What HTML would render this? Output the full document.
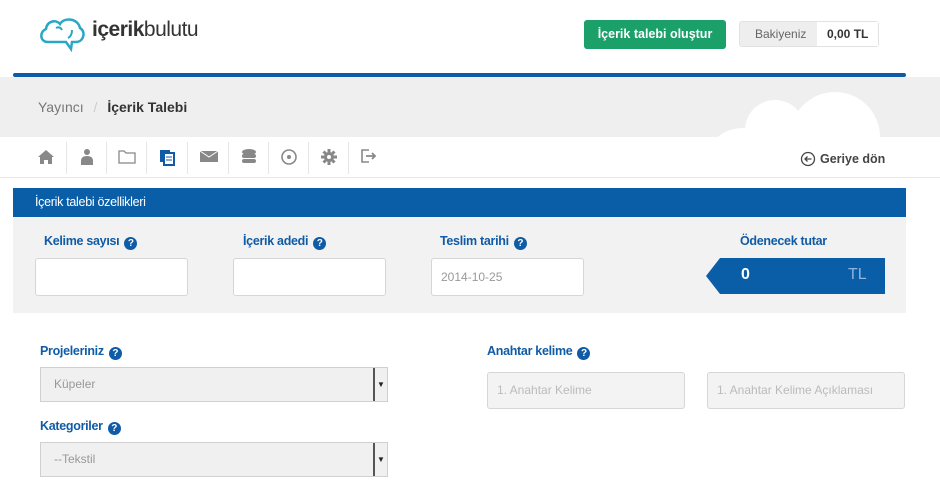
<!DOCTYPE html><html><head><meta charset="utf-8"><style>
*{box-sizing:border-box;margin:0;padding:0}
body{width:940px;height:486px;overflow:hidden;background:#fff;font-family:"Liberation Sans",sans-serif;position:relative}
.a{position:absolute}
.lbl{position:absolute;color:#0f5ba6;font-weight:bold;font-size:12.5px;letter-spacing:-0.3px}
.q{display:inline-block;width:13px;height:13px;border-radius:50%;background:#0f5ba6;color:#fff;font-size:10px;text-align:center;line-height:13px;margin-left:5px;vertical-align:-1px}
.inp{position:absolute;background:#fff;border:1px solid #d6d6d6;border-radius:3px;font-size:12px;color:#999;padding-left:9px}
.sel{position:absolute;background:#f0f0f0;border:1px solid #d0d0d0;font-size:12px;color:#999;padding-left:13px}
.sel b{position:absolute;right:0;top:0;bottom:0;width:14px;background:#f0f0f0;border-left:2px solid #555;font-size:8px;color:#222;text-align:center}
.ic{position:absolute;top:148px;width:18px;height:18px;color:#888;font-size:15px;text-align:center}
.sep{position:absolute;top:142px;width:1px;height:32px;background:#e6e6e6}
</style></head><body>
<svg class="a" style="left:38px;top:16px" width="48" height="36" viewBox="0 0 48 36"><path d="M10 26 C2 26 1 16 8 13 C9 5 18 3 22 8 C26 1 40 2 42 12 C48 15 46 26 38 26 L34 26 L33 33 L28 26 Z" fill="none" stroke="#2aa7c6" stroke-width="2.5"/><path d="M18 12 q4 -2 6 2 M34 14 q0 6 -4 8" fill="none" stroke="#2aa7c6" stroke-width="2"/></svg>
<div class="a" style="left:92px;top:18px;font-size:21px;color:#333;letter-spacing:-0.5px"><b>içerik</b>bulutu</div>
<div class="a" style="left:584px;top:20px;width:142px;height:29px;background:#1aa068;border-radius:3px;color:#fff;font-weight:bold;font-size:12.5px;text-align:center;line-height:29px">İçerik talebi oluştur</div>
<div class="a" style="left:739px;top:21px;width:140px;height:26px;border:1px solid #e2e2e2;border-radius:3px;background:#eee;font-size:12px;line-height:24px"><span style="position:absolute;left:15px;color:#666">Bakiyeniz</span><span style="position:absolute;left:77px;right:0;top:0;bottom:0;background:#fff;font-weight:bold;color:#333;padding-left:10px">0,00 TL</span></div>
<div class="a" style="left:13px;top:73px;width:893px;height:4px;background:#0f5ba6;border-radius:2px"></div>
<div class="a" style="left:0;top:77px;width:940px;height:60px;background:#efefef"></div>
<div class="a" style="left:745px;top:100px;width:60px;height:60px;border-radius:50%;background:#fff"></div>
<div class="a" style="left:790px;top:92px;width:90px;height:90px;border-radius:50%;background:#fff"></div>
<div class="a" style="left:713px;top:128px;width:60px;height:40px;border-radius:50%;background:#fff"></div>
<div class="a" style="left:38px;top:99px;font-size:14px;color:#777">Yayıncı <span style="color:#ccc;margin:0 6px">/</span> <b style="color:#333">İçerik Talebi</b></div>
<div class="a" style="left:0;top:137px;width:940px;height:41px;background:#fff;border-bottom:1px solid #e8e8e8"></div>
<div class="ic" style="left:37px"><svg width="18" height="18"><path d="M9 2L1 9h2v7h4v-4h4v4h4V9h2z" fill="#888"/></svg></div>
<div class="sep" style="left:66px"></div>
<div class="ic" style="left:78px"><svg width="18" height="18"><circle cx="9" cy="4" r="3" fill="#888"/><path d="M3 17v-4q0-5 6-5t6 5v4z" fill="#888"/></svg></div>
<div class="sep" style="left:106px"></div>
<div class="ic" style="left:118px"><svg width="18" height="16"><path d="M1 3h5l2 2h9v10H1z" fill="none" stroke="#888" stroke-width="1.3"/></svg></div>
<div class="sep" style="left:146px"></div>
<div class="ic" style="left:158px"><svg width="18" height="18"><rect x="2" y="2" width="10" height="12" fill="#0f5ba6"/><rect x="6" y="5" width="10" height="12" fill="#fff" stroke="#0f5ba6" stroke-width="2"/><path d="M8 9h6M8 12h6" stroke="#0f5ba6"/></svg></div>
<div class="sep" style="left:187px"></div>
<div class="ic" style="left:199px"><svg width="20" height="16"><rect x="1" y="3" width="18" height="11" fill="#888"/><path d="M1 3l9 6 9-6" stroke="#fff" fill="none"/></svg></div>
<div class="sep" style="left:228px"></div>
<div class="ic" style="left:240px"><svg width="16" height="18"><ellipse cx="8" cy="4" rx="7" ry="3" fill="#888"/><rect x="1" y="6" width="14" height="4" rx="2" fill="#888"/><rect x="1" y="11" width="14" height="4" rx="2" fill="#888"/></svg></div>
<div class="sep" style="left:268px"></div>
<div class="ic" style="left:280px"><svg width="18" height="18"><circle cx="9" cy="9" r="7" fill="none" stroke="#888" stroke-width="1.6"/><circle cx="9" cy="9" r="2" fill="#888"/></svg></div>
<div class="sep" style="left:308px"></div>
<div class="ic" style="left:320px"><svg width="18" height="18"><g stroke="#888" stroke-width="3"><path d="M9 1v16M1 9h16M3.5 3.5l11 11M14.5 3.5l-11 11"/></g><circle cx="9" cy="9" r="5" fill="#888"/><circle cx="9" cy="9" r="2" fill="#fff"/></svg></div>
<div class="sep" style="left:348px"></div>
<div class="ic" style="left:360px"><svg width="18" height="16"><path d="M9 2H2v12h7" fill="none" stroke="#888" stroke-width="1.6"/><path d="M6 8h9M12 5l3 3-3 3" fill="none" stroke="#888" stroke-width="1.8"/></svg></div>
<svg class="a" style="left:800px;top:151px" width="16" height="16"><circle cx="8" cy="8" r="6.5" fill="none" stroke="#444" stroke-width="1.3"/><path d="M11.5 8H5M7.5 5.5L5 8l2.5 2.5" fill="none" stroke="#444" stroke-width="1.3"/></svg>
<div class="a" style="left:820px;top:152px;font-size:12.5px;font-weight:bold;color:#444">Geriye dön</div>
<div class="a" style="left:13px;top:188px;width:893px;height:29px;background:#0a5ea8;color:#fff;font-size:12.5px;line-height:29px;padding-left:22px;letter-spacing:-0.3px">İçerik talebi özellikleri</div>
<div class="a" style="left:13px;top:217px;width:893px;height:96px;background:#f3f2f2"></div>
<div class="lbl" style="left:44px;top:234px">Kelime sayısı<span class="q">?</span></div>
<div class="lbl" style="left:243px;top:234px">İçerik adedi<span class="q">?</span></div>
<div class="lbl" style="left:440px;top:234px">Teslim tarihi<span class="q">?</span></div>
<div class="lbl" style="left:740px;top:234px">Ödenecek tutar</div>
<div class="inp" style="left:35px;top:258px;width:153px;height:38px"></div>
<div class="inp" style="left:233px;top:258px;width:153px;height:38px"></div>
<div class="inp" style="left:431px;top:258px;width:153px;height:38px;line-height:36px">2014-10-25</div>
<svg class="a" style="left:706px;top:258px" width="180" height="36"><path d="M14 0H179V36H14L0 18Z" fill="#0a5ea8"/></svg>
<div class="a" style="left:741px;top:266px;color:#fff;font-size:16px;font-weight:bold">0</div>
<div class="a" style="left:848px;top:266px;color:#8db4dc;font-size:16px">TL</div>
<div class="lbl" style="left:40px;top:344px">Projeleriniz<span class="q">?</span></div>
<div class="sel" style="left:40px;top:367px;width:348px;height:35px;line-height:33px">Küpeler<b style="line-height:33px">▼</b></div>
<div class="lbl" style="left:40px;top:419px">Kategoriler<span class="q">?</span></div>
<div class="sel" style="left:40px;top:442px;width:348px;height:35px;line-height:33px">--Tekstil<b style="line-height:33px">▼</b></div>
<div class="lbl" style="left:487px;top:344px">Anahtar kelime<span class="q">?</span></div>
<div class="inp" style="left:487px;top:372px;width:198px;height:37px;line-height:35px;background:#f3f3f3;color:#bbb">1. Anahtar Kelime</div>
<div class="inp" style="left:707px;top:372px;width:198px;height:37px;line-height:35px;background:#f3f3f3;color:#bbb">1. Anahtar Kelime Açıklaması</div>
</body></html>
